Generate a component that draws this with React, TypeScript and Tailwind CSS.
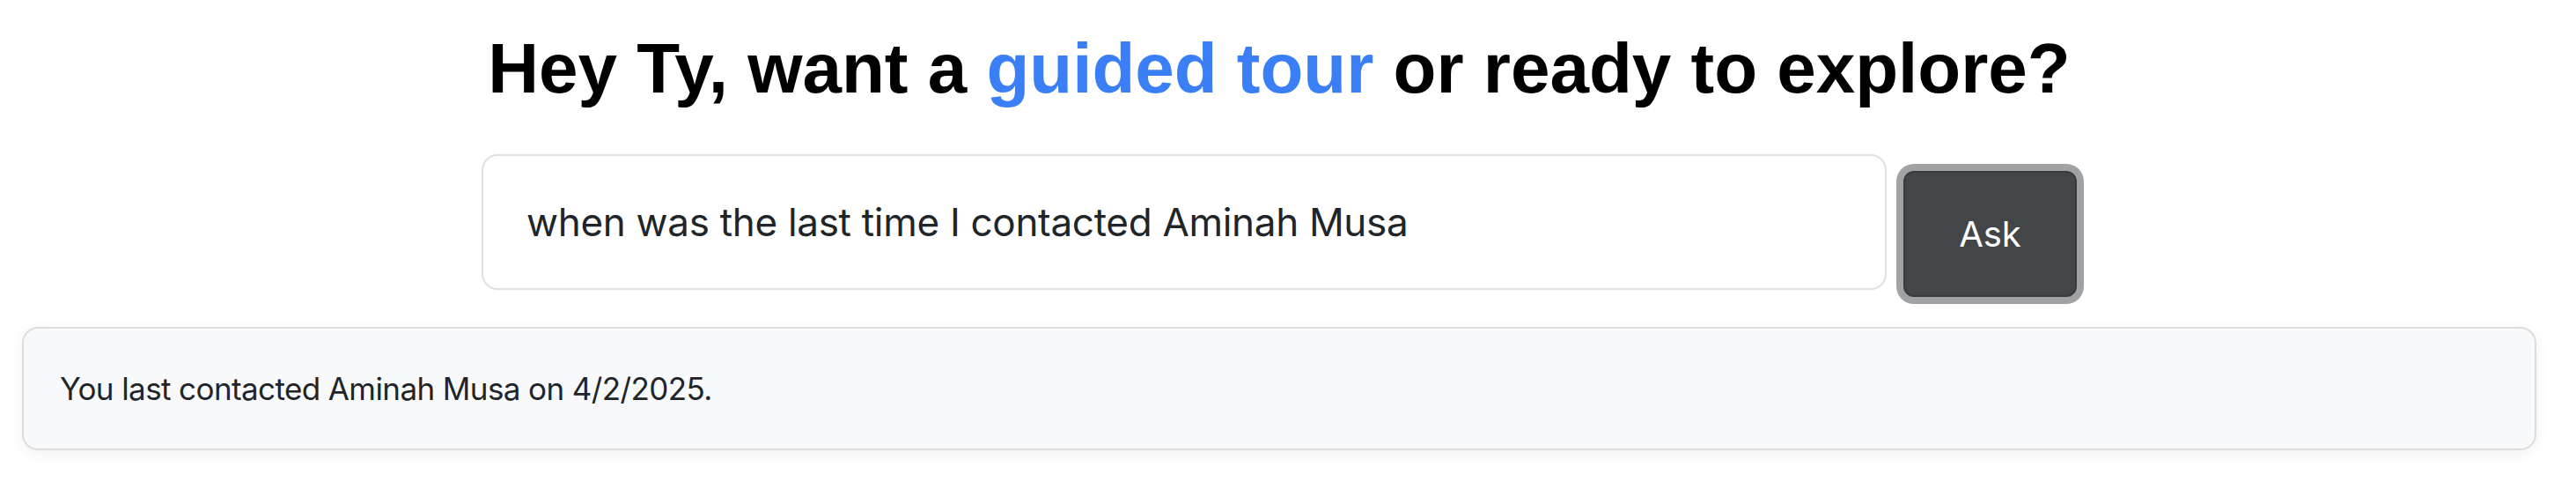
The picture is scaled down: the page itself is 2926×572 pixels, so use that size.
export default function App() {
  return (
    <div className="min-h-screen bg-white pt-[30px] pl-[25px] pr-[45px]" style={{ fontFamily: "Inter, 'Noto Sans', sans-serif" }}>
      <h1
        className="text-center text-[80px] leading-[96px] font-bold text-black"
        style={{ fontFamily: "'Liberation Sans', Arial, sans-serif" }}
      >
        Hey Ty, want a <span className="text-[#3b7ff6]">guided tour</span> or ready to explore?
      </h1>
      <div className="mt-[49px] flex items-start justify-center pl-[19px]">
        <div className="flex h-[154px] w-[1596px] items-center rounded-[18px] border-2 border-[#dee2e6] bg-white px-[49px] text-[44px] tracking-[-0.3px] text-[#212529]">
          when was the last time I contacted Aminah Musa
        </div>
        <button className="m-[19px] flex h-[143px] w-[197px] items-center justify-center rounded-[12px] border-2 border-[#373b3e] bg-[#424649] text-[40px] text-white ring-[8px] ring-[#a0a2a4]">
          Ask
        </button>
      </div>
      <div className="mt-[15px] flex h-[140px] items-center rounded-[18px] border-2 border-[#dddddd] bg-[#f8f9fa] px-[41px] text-[35px] tracking-[-0.6px] text-[#212529] shadow-[0_4px_16px_rgba(0,0,0,0.06)]">
        You last contacted Aminah Musa on 4/2/2025.
      </div>
    </div>
  );
}
